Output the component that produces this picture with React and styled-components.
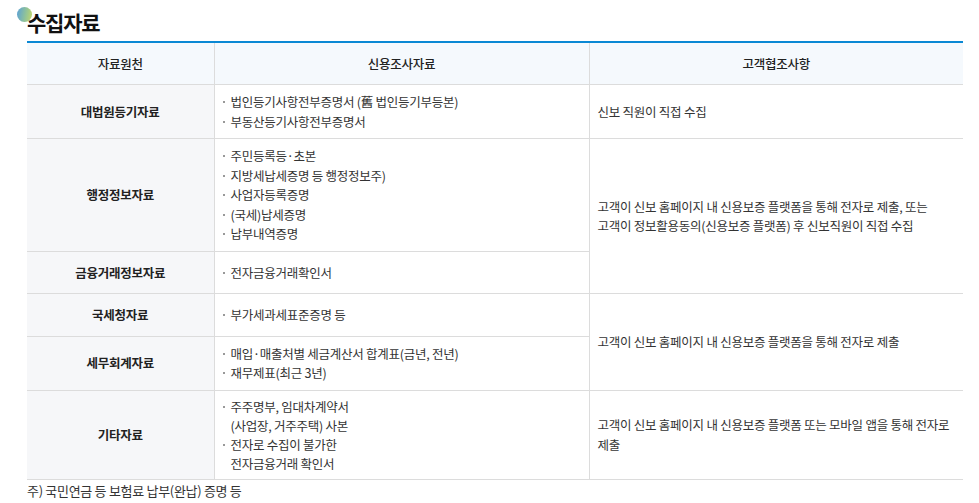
import React from 'react'
import styled, { createGlobalStyle } from 'styled-components'

const GlobalStyle = createGlobalStyle`
    body {
        margin: 0;
        background: #fff;
        font-family: "Noto Sans CJK KR", "Noto Sans", sans-serif;
        color: #333;
    }
`

const rows = [
    {
        source: '대법원등기자료',
        items: ['법인등기사항전부증명서 (舊 법인등기부등본)', '부동산등기사항전부증명서'],
        note: '신보 직원이 직접 수집',
        span: 1,
    },
    {
        source: '행정정보자료',
        items: ['주민등록등·초본', '지방세납세증명 등 행정정보주)', '사업자등록증명', '(국세)납세증명', '납부내역증명'],
        note: '고객이 신보 홈페이지 내 신용보증 플랫폼을 통해 전자로 제출, 또는\n고객이 정보활용동의(신용보증 플랫폼) 후 신보직원이 직접 수집',
        span: 2,
    },
    {
        source: '금융거래정보자료',
        items: ['전자금융거래확인서'],
    },
    {
        source: '국세청자료',
        items: ['부가세과세표준증명 등'],
        note: '고객이 신보 홈페이지 내 신용보증 플랫폼을 통해 전자로 제출',
        span: 2,
    },
    {
        source: '세무회계자료',
        items: ['매입·매출처별 세금계산서 합계표(금년, 전년)', '재무제표(최근 3년)'],
    },
    {
        source: '기타자료',
        items: ['주주명부, 임대차계약서\n(사업장, 거주주택) 사본', '전자로 수집이 불가한\n전자금융거래 확인서'],
        note: '고객이 신보 홈페이지 내 신용보증 플랫폼 또는 모바일 앱을 통해 전자로\n제출',
        span: 1,
        tight: true,
    },
]

const App = () => {
    return (
        <Page>
            <GlobalStyle />
            <Title>수집자료</Title>
            <Table>
                <colgroup>
                    <col style={{ width: 187 }} />
                    <col style={{ width: 375 }} />
                    <col />
                </colgroup>
                <thead>
                    <tr>
                        <Th>자료원천</Th>
                        <Th>신용조사자료</Th>
                        <Th>고객협조사항</Th>
                    </tr>
                </thead>
                <tbody>
                    {rows.map((row) => (
                        <tr key={row.source}>
                            <SourceCell>{row.source}</SourceCell>
                            <Td>
                                <List $tight={row.tight}>
                                    {row.items.map((item) => (
                                        <Item key={item}>{item}</Item>
                                    ))}
                                </List>
                            </Td>
                            {row.note &&
                                <NoteCell rowSpan={row.span}>{row.note}</NoteCell>
                            }
                        </tr>
                    ))}
                </tbody>
            </Table>
            <Footnote>주) 국민연금 등 보험료 납부(완납) 증명 등</Footnote>
        </Page>
    )
}

export default App

const Page = styled.div`
    width: 936px;
    padding: 7px 0 0 27px;
`

const Title = styled.h2`
    position: relative;
    margin: 0;
    height: 34px;
    font-size: 21px;
    font-weight: 700;
    letter-spacing: -1.2px;
    line-height: 30px;
    color: #111;
    z-index: 0;

    &::before {
        content: '';
        position: absolute;
        left: -10px;
        top: 0;
        width: 15px;
        height: 15px;
        border-radius: 50%;
        background: linear-gradient(100deg, #5aa0d8 0%, #8fc29a 55%, #c4d86a 100%);
        z-index: -1;
    }
`

const Table = styled.table`
    width: 100%;
    border-collapse: collapse;
    table-layout: fixed;
    border-top: 2px solid #0a88d4;
    font-size: 12.5px;
    letter-spacing: -0.25px;
    line-height: 19.5px;
`

const Th = styled.th`
    height: 41px;
    padding: 0 8px;
    background: #f5f9fd;
    border: 1px solid #dcdcdc;
    border-top: none;
    font-weight: 500;
    color: #222;
    text-align: center;

    &:first-child { border-left: none; }
    &:last-child { border-right: none; }
`

const Td = styled.td`
    padding: 11px 8px;
    border: 1px solid #dcdcdc;
    vertical-align: middle;
    color: #333;
`

const SourceCell = styled(Td)`
    border-left: none;
    background: #f6f7f9;
    font-weight: 700;
    color: #222;
    text-align: center;
`

const NoteCell = styled(Td)`
    border-right: none;
    white-space: pre-line;
`

const List = styled.ul`
    list-style: none;
    margin: ${props => props.$tight ? '-5px 0' : '-4px 0'};
    padding: 0;
    line-height: ${props => props.$tight ? '19px' : '19.5px'};
`

const Item = styled.li`
    position: relative;
    padding-left: 8px;
    white-space: pre-line;

    &::before {
        content: '';
        position: absolute;
        left: 0;
        top: 9px;
        width: 2px;
        height: 2px;
        background: #999;
    }
`

const Footnote = styled.p`
    margin: 1px 0 0;
    font-size: 13px;
    line-height: 20px;
    letter-spacing: -0.3px;
    color: #333;
`
